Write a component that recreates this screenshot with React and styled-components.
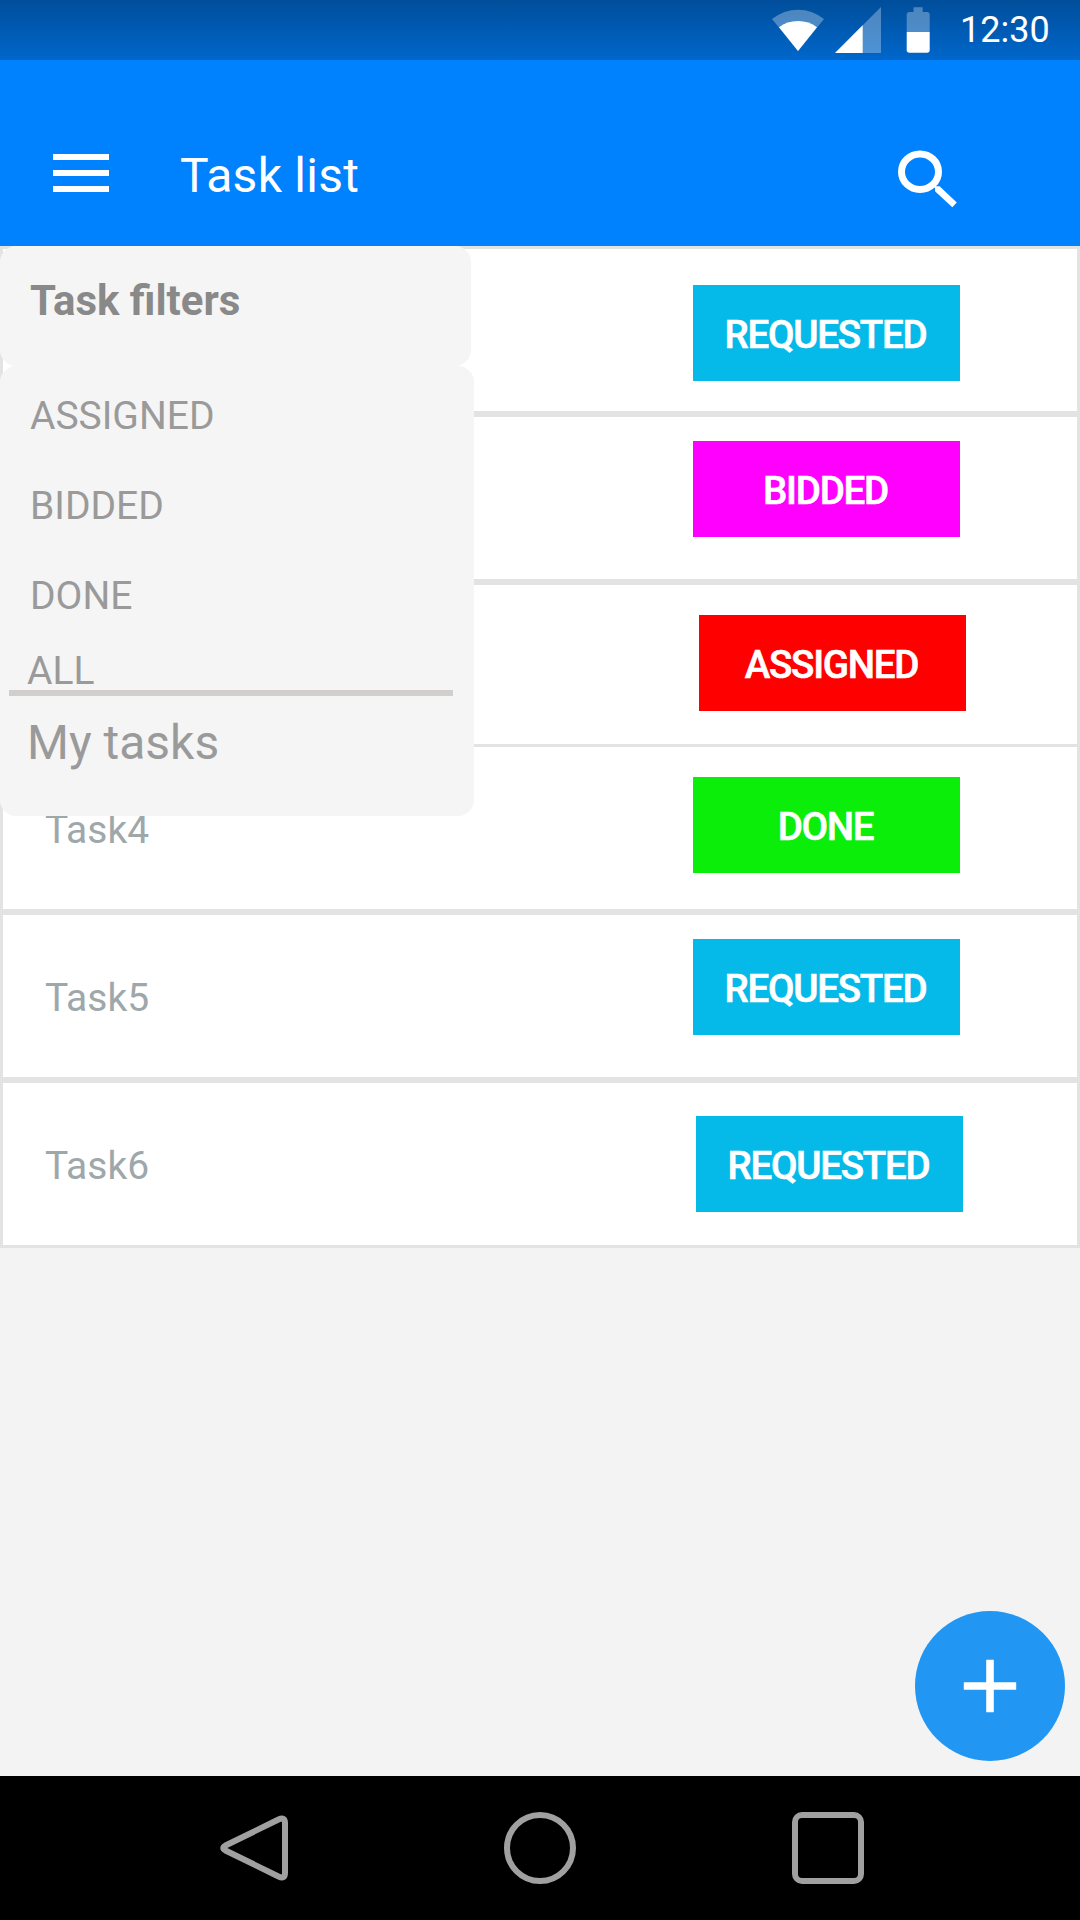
import React from "react";
import styled, { createGlobalStyle } from "styled-components";

const GlobalStyle = createGlobalStyle`
  * { box-sizing: border-box; }
  body { margin: 0; background: #f3f3f3; font-family: Roboto, "Liberation Sans", sans-serif; }
  ul { list-style: none; margin: 0; padding: 0; }
  h1, h2 { margin: 0; }
  button { border: 0; padding: 0; background: none; font: inherit; color: inherit; display: block; }
  svg { display: block; }
`;

const Screen = styled.div`
  width: 1080px;
  height: 1920px;
  display: flex;
  flex-direction: column;
  overflow: hidden;
  background: #f3f3f3;
`;

const StatusBar = styled.header`
  height: 60px;
  display: flex;
  align-items: center;
  justify-content: flex-end;
  padding-right: 30px;
  background: linear-gradient(#004e9b, #0067cb);
`;

const StatusIcons = styled.svg`
  width: 160px;
  height: 60px;
  margin-right: 30px;
`;

const Clock = styled.time`
  width: 90px;
  font-size: 36px;
  line-height: 60px;
  color: #fff;
`;

const AppBar = styled.div`
  height: 186px;
  flex: none;
  display: flex;
  align-items: flex-start;
  padding: 85px 121px 0 53px;
  background: #0082ff;
  color: #fff;
`;

const MenuButton = styled.button`
  width: 56px;
  height: 38px;
  margin: 9px 71px 0 0;
  display: flex;
  flex-direction: column;
  justify-content: space-between;
`;

const MenuBar = styled.span`
  width: 56px;
  height: 6px;
  background: #fff;
`;

const Title = styled.h1`
  flex: 1;
  font-size: 48px;
  font-weight: 400;
  line-height: 61px;
  letter-spacing: 0.25px;
`;

const SearchButton = styled.button`
  margin-top: 5px;
`;

const Content = styled.main`
  position: relative;
  flex: 1;
`;

const TaskRow = styled.li`
  height: ${(p) => (p.$compact ? 162 : 168)}px;
  display: flex;
  align-items: flex-start;
  padding-left: 42px;
  border: 3px solid #e3e3e3;
  border-bottom-width: ${(p) => (p.$compact ? 0 : 3)}px;
  background: #fff;
`;

const TaskName = styled.span`
  margin-top: 59px;
  font-size: 39px;
  line-height: 48px;
  color: #9ea7aa;
`;

const Badge = styled.span`
  width: 267px;
  height: 96px;
  margin: ${(p) => p.$top}px ${(p) => p.$right}px 0 auto;
  padding: 2px 2px 0 0;
  display: flex;
  align-items: center;
  justify-content: center;
  background: ${(p) => p.$color};
  color: #fff;
  font-size: 38.5px;
  font-weight: 500;
  letter-spacing: -1.25px;
  -webkit-text-stroke: 0.6px #fff;
`;

const Drawer = styled.aside`
  position: absolute;
  top: 0;
  left: 0;
  width: 474px;
`;

const DrawerHeader = styled.div`
  width: 471px;
  height: 119.5px;
  margin-bottom: 0.5px;
  padding: 29px 30px 0;
  border-radius: 16px;
  background: #f5f5f5;
`;

const DrawerTitle = styled.h2`
  font-size: 42px;
  font-weight: 700;
  line-height: 51px;
  color: #898989;
`;

const DrawerBody = styled.div`
  height: 450px;
  padding-top: 31px;
  border-radius: 16px;
  background: #f5f5f5;
  color: #9a9a9a;
`;

const FilterList = styled.ul`
  display: flex;
  flex-direction: column;
  gap: 52px;
  padding-left: 30px;
`;

const Filter = styled.li`
  font-size: 39px;
  line-height: 38px;
`;

const AllFilter = styled.div`
  margin: 37px 21px 0 9px;
  padding-left: 18px;
  border-bottom: 6px solid #d2cecd;
  font-size: 39px;
  line-height: 38px;
`;

const MyTasks = styled.div`
  margin: 18px 0 0 27px;
  font-size: 48px;
  line-height: 57px;
`;

const AddButton = styled.button`
  position: absolute;
  right: 15px;
  bottom: 15px;
  width: 150px;
  height: 150px;
  border-radius: 50%;
  background: #2196f3;
`;

const NavBar = styled.nav`
  height: 144px;
  flex: none;
  display: flex;
  align-items: center;
  justify-content: space-between;
  padding: 0 216px;
  background: #000;
`;

const tasks = [
  { id: 1, status: "REQUESTED", top: 36, right: 117 },
  { id: 2, status: "BIDDED", top: 24, right: 117 },
  { id: 3, status: "ASSIGNED", top: 30, right: 111, compact: true },
  { id: 4, name: "Task4", status: "DONE", top: 30, right: 117 },
  { id: 5, name: "Task5", status: "REQUESTED", top: 24, right: 117 },
  { id: 6, name: "Task6", status: "REQUESTED", top: 33, right: 114 },
];

const statusColors = {
  REQUESTED: "#05b9e8",
  BIDDED: "#ff00ff",
  ASSIGNED: "#ff0000",
  DONE: "#0aee0a",
};

const NavIcon = ({ children }) => (
  <svg width="72" height="72" viewBox="0 0 72 72" fill="none" stroke="#a0a0a0" strokeWidth="6">
    {children}
  </svg>
);

export default function App() {
  return (
    <Screen>
      <GlobalStyle />
      <StatusBar>
        <StatusIcons viewBox="770 0 160 60" fill="#fff">
          <path d="M772 19Q784 9.7 798 9.7T824 19L798 51Z" opacity=".3" />
          <path d="M779 27.3Q787 21 798 21T817 27.3L798 51Z" />
          <path d="M881 7V53H835Z" opacity=".3" />
          <path d="M862.7 25.3V53H835Z" />
          <path d="M913.5 7.3H922.7V12H927Q929.7 12 929.7 15V32H906.7V15Q906.7 12 909.5 12H913.5Z" opacity=".3" />
          <path d="M906.7 32H929.7V50Q929.7 52.7 927 52.7H909.5Q906.7 52.7 906.7 50Z" />
        </StatusIcons>
        <Clock>12:30</Clock>
      </StatusBar>
      <AppBar>
        <MenuButton aria-label="Menu">
          <MenuBar />
          <MenuBar />
          <MenuBar />
        </MenuButton>
        <Title>Task list</Title>
        <SearchButton aria-label="Search">
          <svg width="61" height="58" viewBox="0 0 61 58">
            <ellipse cx="22" cy="21.7" rx="18.5" ry="17.8" fill="none" stroke="#fff" strokeWidth="7" />
            <path d="M34 33L38 36.2L41.6 36.2L58.8 52.6L54.3 57.3L37 41.2V38Z" fill="#fff" />
          </svg>
        </SearchButton>
      </AppBar>
      <Content>
        <ul>
          {tasks.map((t) => (
            <TaskRow key={t.id} $compact={t.compact}>
              {t.name && <TaskName>{t.name}</TaskName>}
              <Badge $color={statusColors[t.status]} $top={t.top} $right={t.right}>
                {t.status}
              </Badge>
            </TaskRow>
          ))}
        </ul>
        <Drawer>
          <DrawerHeader>
            <DrawerTitle>Task filters</DrawerTitle>
          </DrawerHeader>
          <DrawerBody>
            <FilterList>
              <Filter>ASSIGNED</Filter>
              <Filter>BIDDED</Filter>
              <Filter>DONE</Filter>
            </FilterList>
            <AllFilter>ALL</AllFilter>
            <MyTasks>My tasks</MyTasks>
          </DrawerBody>
        </Drawer>
        <AddButton aria-label="Add task">
          <svg width="150" height="150" viewBox="0 0 150 150" fill="none" stroke="#fff" strokeWidth="7.6">
            <path d="M48.8 75H101.2M75 48.8V101.2" />
          </svg>
        </AddButton>
      </Content>
      <NavBar>
        <NavIcon>
          <path d="M62.5 7.5L9.5 33.5Q5 36 9.5 38.5L62.5 64.5Q69 67.5 69 61V11Q69 4.5 62.5 7.5Z" />
        </NavIcon>
        <NavIcon>
          <circle cx="36" cy="36" r="33" />
        </NavIcon>
        <NavIcon>
          <rect x="3" y="3" width="66" height="66" rx="7" />
        </NavIcon>
      </NavBar>
    </Screen>
  );
}
